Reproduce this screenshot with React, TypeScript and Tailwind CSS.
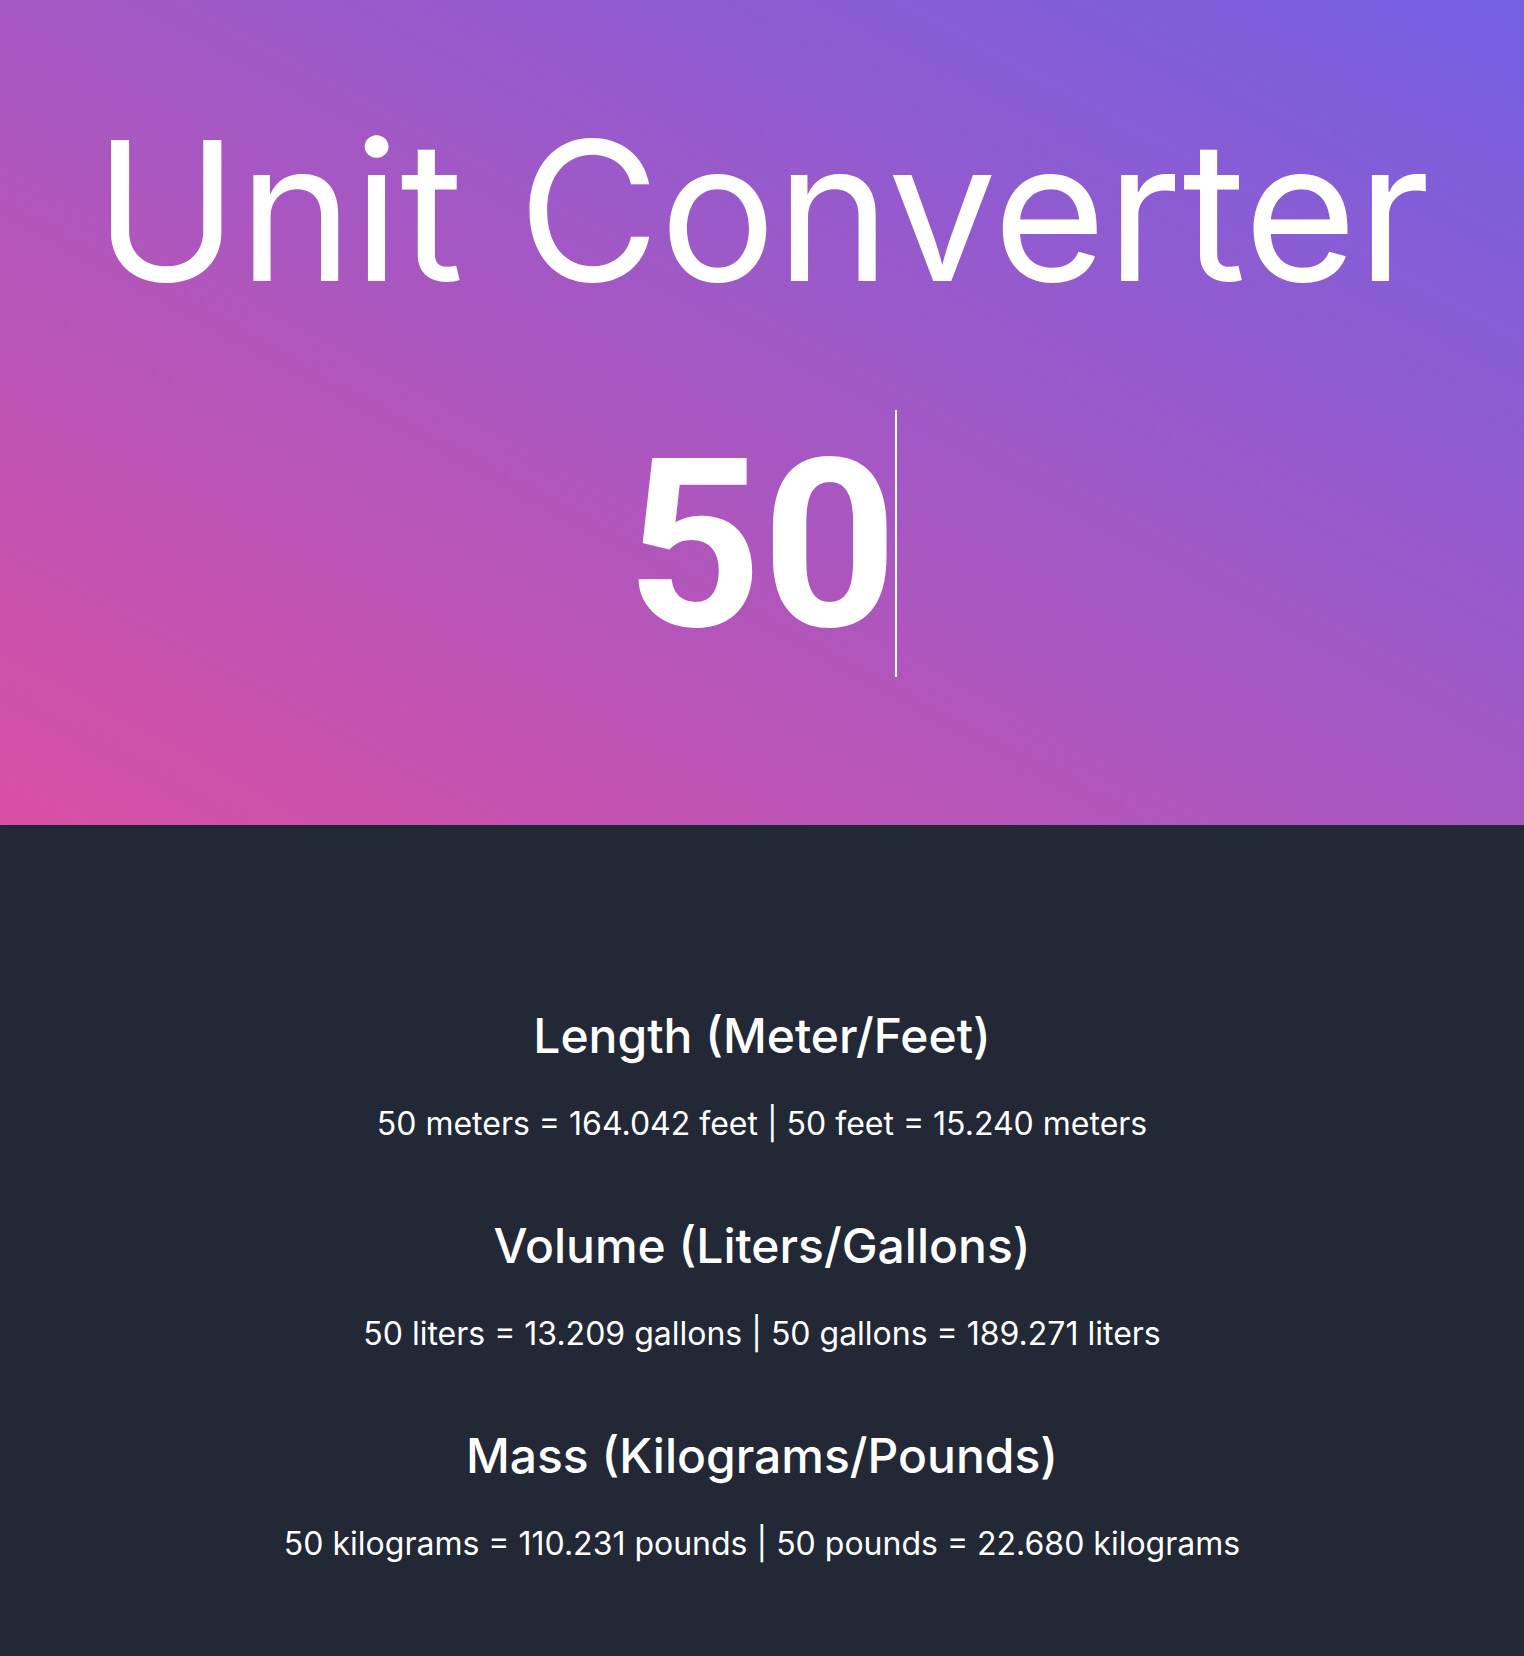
import { useState } from "react";

const conversions = [
  {
    title: "Length (Meter/Feet)",
    from: ["meters", "feet"],
    factor: 3.28084,
  },
  {
    title: "Volume (Liters/Gallons)",
    from: ["liters", "gallons"],
    factor: 0.264172,
  },
  {
    title: "Mass (Kilograms/Pounds)",
    from: ["kilograms", "pounds"],
    factor: 2.20462,
  },
];

export default function App() {
  const [value] = useState(50);

  return (
    <div className="min-h-screen flex flex-col font-['Inter','Noto_Sans',sans-serif] text-white">
      <header className="h-[825px] flex flex-col items-center bg-[linear-gradient(to_top_right,#d84fa4,#7360e2)]">
        <h1 className="mt-[114px] text-[194px] leading-none font-normal">
          Unit Converter
        </h1>
        <div className="mt-[120px] flex items-start">
          <span className="text-[236px] leading-none font-bold font-['Roboto',sans-serif]">
            {value}
          </span>
          <span className="w-[2px] h-[267px] bg-white -ml-[2px] -mt-[18px]"></span>
        </div>
      </header>

      <main className="flex-1 bg-[#222836] flex flex-col items-center gap-20 pt-[187px] pb-[94px]">
        {conversions.map((c) => (
          <section key={c.title} className="flex flex-col items-center">
            <h2 className="text-5xl leading-none font-medium">{c.title}</h2>
            <p className="mt-[46px] text-[32px] leading-9">
              {value} {c.from[0]} = {(value * c.factor).toFixed(3)} {c.from[1]} | {value}{" "}
              {c.from[1]} = {(value / c.factor).toFixed(3)} {c.from[0]}
            </p>
          </section>
        ))}
      </main>
    </div>
  );
}
